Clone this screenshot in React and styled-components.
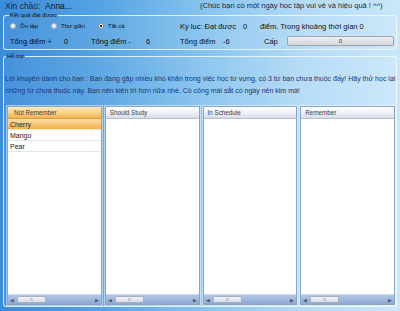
import React from "react";
import styled, { createGlobalStyle } from "styled-components";

const Global = createGlobalStyle`
  html, body { margin: 0; padding: 0; }
  body { font-family: "Liberation Sans", Arial, sans-serif; }
  * { box-sizing: border-box; }
`;

const Window = styled.div`
  width: 400px;
  height: 311px;
  overflow: hidden;
  padding: 0 3px;
  background: linear-gradient(90deg, #3a8bd8 0%, #55a3e3 25%, #85c2ee 50%, #b2daf6 75%, #cae7fa 100%);
  color: #111;
`;

const TopBar = styled.div`
  height: 11px;
  display: flex;
  align-items: center;
  font-size: 8.5px;
  padding-left: 2px;
  white-space: nowrap;
`;

const Hello = styled.span`
  width: 40px;
  color: #1c2a3c;
`;

const Name = styled.span`
  width: 155px;
`;

const Wish = styled.span`
  font-size: 7.5px;
  color: #1c2a3c;
`;

const Group = styled.fieldset`
  margin: ${(p) => p.$mt}px 0 0;
  padding: 0 ${(p) => p.$pr}px ${(p) => p.$pb}px ${(p) => p.$pl}px;
  border: 1px solid rgba(240, 250, 255, 0.85);
  border-radius: 3px;
  min-width: 0;
  background: rgba(255, 255, 255, 0.06);
`;

const Legend = styled.legend`
  font-size: 6px;
  line-height: 8px;
  padding: 0 1px;
  margin-left: ${(p) => p.$ml}px;
  color: #111;
`;

const Row = styled.div`
  display: flex;
  align-items: center;
  height: ${(p) => p.$h}px;
  white-space: nowrap;
`;

const Cell = styled.div`
  width: ${(p) => (p.$w ? `${p.$w}px` : "auto")};
  flex: none;
  font-size: ${(p) => p.$fs || 7.5}px;
  display: flex;
  align-items: center;
`;

const Radio = styled.span`
  width: 6px;
  height: 6px;
  border-radius: 50%;
  border: 1px solid ${(p) => (p.$on ? "#8a8f99" : "#b8bcc4")};
  background: ${(p) =>
    p.$on
      ? "radial-gradient(circle, #2b2b2b 0 1.2px, #ffffff 1.6px)"
      : "radial-gradient(circle at 40% 35%, #ffffff, #cfd3da)"};
  margin-right: 4px;
`;

const Bar = styled.div`
  width: 108px;
  height: 10px;
  border: 1px solid #9ea3ad;
  border-radius: 2px;
  background: linear-gradient(#efeff2, #d4d5db);
  display: flex;
  align-items: center;
  justify-content: center;
  font-size: 6px;
  color: #333;
`;

const Advice = styled.p`
  margin: 13px 0 0;
  font-size: 7px;
  line-height: 12px;
  color: #1d3670;
`;

const Lists = styled.div`
  margin: 9px 1px 0 2px;
  height: 199px;
  display: grid;
  grid-template-columns: repeat(4, 1fr);
  gap: 3px;
`;

const Panel = styled.div`
  display: flex;
  flex-direction: column;
  background: #fff;
  border: 1px solid #8aa2c4;
  box-shadow: 0 0 0 1px rgba(255, 255, 255, 0.5);
  min-width: 0;
`;

const Header = styled.div`
  height: 12px;
  flex: none;
  display: flex;
  align-items: center;
  padding-left: ${(p) => (p.$active ? 6 : 4)}px;
  font-size: 6.3px;
  color: #3a3a3a;
  border-bottom: 1px solid ${(p) => (p.$active ? "#d99b3c" : "#b6c0d2")};
  background: ${(p) =>
    p.$active
      ? "linear-gradient(#fde9bf, #f9d084 55%, #f4b450)"
      : "linear-gradient(#ffffff, #eef0f5 55%, #d6dce8)"};
`;

const Item = styled.div`
  height: 11px;
  flex: none;
  display: flex;
  align-items: center;
  padding-left: 2px;
  font-size: 7px;
  color: #222;
  border-bottom: 1px solid #e6e6e6;
  background: ${(p) =>
    p.$sel ? "linear-gradient(#fde2ad, #f9c676 50%, #f5b14c)" : "#fff"};
`;

const Fill = styled.div`
  flex: 1;
`;

const Scroll = styled.div`
  height: 10px;
  flex: none;
  position: relative;
  background: linear-gradient(#b3c7e6, #8fa9d4);
  border-top: 1px solid #c8d6ec;
  display: flex;
  align-items: center;
  justify-content: space-between;
  padding: 0 2px;
  font-size: 5px;
  color: #4c5a72;
`;

const Thumb = styled.div`
  position: absolute;
  left: 9px;
  top: 1px;
  width: 29px;
  height: 7px;
  border: 1px solid #a7b1c2;
  border-radius: 1px;
  background: linear-gradient(#f2f4f8, #d5dbe5);
  &::after {
    content: "";
    position: absolute;
    left: 12px;
    top: 1px;
    width: 3px;
    height: 3px;
    background: #c4cbd8;
  }
`;

const lists = [
  { title: "Not Remember", active: true, items: ["Cherry", "Mango", "Pear"] },
  { title: "Should Study", items: [] },
  { title: "In Schedule", items: [] },
  { title: "Remember", items: [] },
];

export default function App() {
  return (
    <>
      <Global />
      <Window>
        <TopBar>
          <Hello>Xin chào:</Hello>
          <Name>Anna...</Name>
          <Wish>(Chúc bạn có một ngày học tập vui vẻ và hiệu quả ! ^^)</Wish>
        </TopBar>

        <Group $mt={0} $pl={6} $pr={2} $pb={0}>
          <Legend $ml={-1}>Kết quả đạt được</Legend>
          <Row $h={14}>
            <Cell $w={41} $fs={6}>
              <Radio />Ôn tập
            </Cell>
            <Cell $w={47} $fs={6}>
              <Radio />Thư giãn
            </Cell>
            <Cell $w={82} $fs={6}>
              <Radio $on />Tất cả
            </Cell>
            <Cell $w={63}>Kỷ lục: Đạt được</Cell>
            <Cell $w={17}>0</Cell>
            <Cell>điểm. Trong khoảng thời gian 0</Cell>
          </Row>
          <Row $h={16}>
            <Cell $w={54}>Tổng điểm +</Cell>
            <Cell $w={27}>0</Cell>
            <Cell $w={55}>Tổng điểm -</Cell>
            <Cell $w={34}>6</Cell>
            <Cell $w={43}>Tổng điểm</Cell>
            <Cell $w={41}>-6</Cell>
            <Cell $w={23}>Cấp</Cell>
            <Bar>0</Bar>
          </Row>
        </Group>

        <Group $mt={2} $pl={1} $pr={0} $pb={1}>
          <Legend $ml={1}>Hỗ trợ</Legend>
          <Advice>
            Lời khuyên dành cho bạn : Bạn đang gặp nhiều khó khăn trong việc học từ vựng, có 3 từ bạn chưa
            thuộc đấy! Hãy thử học lại những từ chưa thuộc này. Bạn nên kiên trì hơn nữa nhé. Có công mài
            sắt có ngày nên kim mà!
          </Advice>
          <Lists>
            {lists.map((l) => (
              <Panel key={l.title}>
                <Header $active={l.active}>{l.title}</Header>
                {l.items.map((it, i) => (
                  <Item key={it} $sel={i === 0}>
                    {it}
                  </Item>
                ))}
                <Fill />
                <Scroll>
                  <span>◀</span>
                  <Thumb />
                  <span>▶</span>
                </Scroll>
              </Panel>
            ))}
          </Lists>
        </Group>
      </Window>
    </>
  );
}
